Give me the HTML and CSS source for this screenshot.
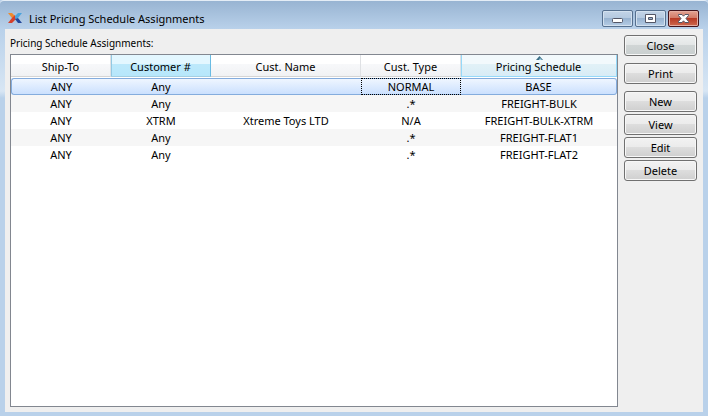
FILE: index.html
```html
<!DOCTYPE html>
<html lang="en">
<head>
<meta charset="utf-8">
<title>List Pricing Schedule Assignments</title>
<link rel="stylesheet" href="styles.css">
</head>
<body>
<div class="window">
  <header class="titlebar">
    <svg class="logo" viewBox="0 0 14 12" aria-hidden="true">
      <path fill="#ee8a2e" d="M0 1h4l3 3v3L4 6z"/>
      <path fill="#d5402b" d="M0 11l4-5 3-3 1 4-4 4z"/>
      <path fill="#4aa3dc" d="M14 1h-4L7 4v3l3-1z"/>
      <path fill="#23479a" d="M14 11h-4L7 7l3-1z"/>
    </svg>
    <h1 class="title">List Pricing Schedule Assignments</h1>
    <div class="controls">
      <button class="control" type="button" aria-label="Minimize">
        <svg viewBox="0 0 31 17"><rect x="10.500" y="8.500" width="10" height="4" rx="1" fill="#fff" stroke="#535666"/></svg>
      </button>
      <button class="control" type="button" aria-label="Maximize">
        <svg viewBox="0 0 31 17"><path fill="#fff" fill-rule="evenodd" stroke="#535666" d="M10.500 4.500h10v8h-10zM13.500 7.500h4v2h-4z"/></svg>
      </button>
      <button class="control control-close" type="button" aria-label="Close window">
        <svg viewBox="0 0 31 17"><path fill="#fff" stroke="#535666" d="M10.500 4.500h3.500l1.500 1.700 1.500-1.700h3.500v1l-2.500 3 2.500 3v1h-3.500l-1.500-1.700-1.500 1.700h-3.500v-1l2.500-3-2.500-3z"/></svg>
      </button>
    </div>
  </header>
  <main class="client">
    <section class="list">
      <h2 class="label" id="list-label">Pricing Schedule Assignments:</h2>
      <div class="frame">
        <table class="grid" aria-labelledby="list-label">
          <colgroup><col class="narrow"><col class="narrow"><col class="wide"><col class="narrow"><col></colgroup>
          <thead>
            <tr><th>Ship-To</th><th class="hot">Customer #</th><th>Cust. Name</th><th>Cust. Type</th><th class="sorted">Pricing Schedule<svg class="arrow" viewBox="0 0 7 4" aria-hidden="true"><path fill="#3c6f86" d="M0 4l3.500-4L7 4z"/><path fill="#a5d1e3" d="M3 4l1-2 2 2z"/></svg></th></tr>
          </thead>
          <tbody>
            <tr class="selected"><td>ANY</td><td>Any</td><td></td><td class="current">NORMAL</td><td>BASE</td></tr>
            <tr><td>ANY</td><td>Any</td><td></td><td>.*</td><td>FREIGHT-BULK</td></tr>
            <tr><td>ANY</td><td>XTRM</td><td>Xtreme Toys LTD</td><td>N/A</td><td>FREIGHT-BULK-XTRM</td></tr>
            <tr><td>ANY</td><td>Any</td><td></td><td>.*</td><td>FREIGHT-FLAT1</td></tr>
            <tr><td>ANY</td><td>Any</td><td></td><td>.*</td><td>FREIGHT-FLAT2</td></tr>
          </tbody>
        </table>
      </div>
    </section>
    <aside class="actions">
      <button class="action action-default" type="button">Close</button>
      <button class="action" type="button">Print</button>
      <div class="group">
        <button class="action" type="button">New</button>
        <button class="action" type="button">View</button>
        <button class="action" type="button">Edit</button>
        <button class="action" type="button">Delete</button>
      </div>
    </aside>
  </main>
</div>
</body>
</html>
```
FILE: styles.css
```css
* { box-sizing: border-box; }

body {
  margin: 0;
  background: #b9d1ea;
  color: #000;
  font: 11px/17px "Noto Sans", "Open Sans", sans-serif;
}

button { font: inherit; color: inherit; padding: 0; }

.window {
  display: flex;
  flex-direction: column;
  min-height: 100vh;
  padding: 0 5px 4px;
  border-top: 1px solid #e4edf6;
  border-radius: 4px 4px 0 0;
  background: linear-gradient(#98b4d2 0, #b9d1ea 28px, #d8e6f4 90px, #b9d1ea 97px);
}

.titlebar {
  display: flex;
  align-items: center;
  height: 28px;
  padding: 6px 4px 0 3px;
}

.logo { width: 14px; height: 12px; }

.title {
  flex: 1;
  margin: 0 0 0 7px;
  font-size: 11px;
  font-weight: 400;
}

.controls { display: flex; gap: 2px; }

.control {
  width: 31px;
  height: 17px;
  border: 1px solid #56708f;
  border-radius: 2px;
  background: linear-gradient(#c3d4e7 0, #b5cae0 45%, #98b3d0 50%, #b5cce5);
  box-shadow: inset 0 0 0 1px #d3e1ef;
}

.control svg { display: block; width: 31px; height: 17px; margin: -1px; }

.control-close {
  border-color: #43141c;
  background: linear-gradient(#e3a393 0, #d27b68 45%, #b73a25 50%, #ce6a4f);
  box-shadow: inset 0 0 0 1px #e5aea2;
}

.client {
  flex: 1;
  display: flex;
  gap: 6px;
  padding: 6px 6px 5px 5px;
  background: #efefef;
}

.list { flex: 1; display: flex; flex-direction: column; min-width: 0; }

.label {
  margin: 0;
  padding-bottom: 2px;
  font-size: 10px;
  font-weight: 400;
}

.frame { flex: 1; border: 1px solid #828790; background: #fff; }

.grid {
  width: 100%;
  table-layout: fixed;
  border-collapse: separate;
  border-spacing: 0;
  text-align: center;
}

.narrow { width: 100px; }
.wide { width: 150px; }

.grid th {
  position: relative;
  height: 22px;
  padding: 2px 0 0;
  border-right: 1px solid #dfe1e4;
  border-bottom: 1px solid #d5d5d5;
  background: linear-gradient(#fff 45%, #f7f8fa 45%, #f1f2f4);
  font-weight: 400;
}

.grid .hot {
  border-color: #69bbe3;
  border-bottom-color: #a5cfe2;
  background: linear-gradient(#e3f7ff 45%, #bde9fb 45%, #b7e7fb);
  box-shadow: inset 1px 0 #93c9e3;
}

.grid .sorted {
  border-color: #96d9f9;
  background: linear-gradient(#f2f9fc 45%, #e1f1f7 45%, #d8ecf6);
  box-shadow: inset 1px 0 #96d9f9;
}

.arrow {
  position: absolute;
  top: 1px;
  left: 50%;
  width: 7px;
  height: 4px;
  margin-left: -3px;
}

.grid tbody::before { content: ""; display: table-row; height: 1px; }

.grid td { height: 17px; padding: 0; line-height: 15px; }
.grid tbody tr:nth-child(even) { background: #f6f6f6; }

.selected td {
  border: solid #84acdd;
  border-width: 1px 0;
  background: linear-gradient(#eff6ff, #cbe0fe);
}

.selected td:first-child { border-left-width: 1px; border-radius: 3px 0 0 3px; }
.selected td:last-child { border-right-width: 1px; border-radius: 0 3px 3px 0; }
.selected .current { outline: 1px dotted #000; outline-offset: -1px; }

.actions { display: flex; flex-direction: column; gap: 7px; width: 73px; }
.group { display: flex; flex-direction: column; gap: 2px; }

.action {
  height: 21px;
  border: 1px solid #707070;
  border-radius: 3px;
  background: linear-gradient(#f2f2f2, #ebebeb 48%, #dddddd 50%, #cfcfcf);
  box-shadow: inset 0 0 0 1px #f7f7f7;
}

.action-default { background: linear-gradient(#eef0f0, #e3e6e6 48%, #d0d5d5 50%, #c9cfcf); }
```
